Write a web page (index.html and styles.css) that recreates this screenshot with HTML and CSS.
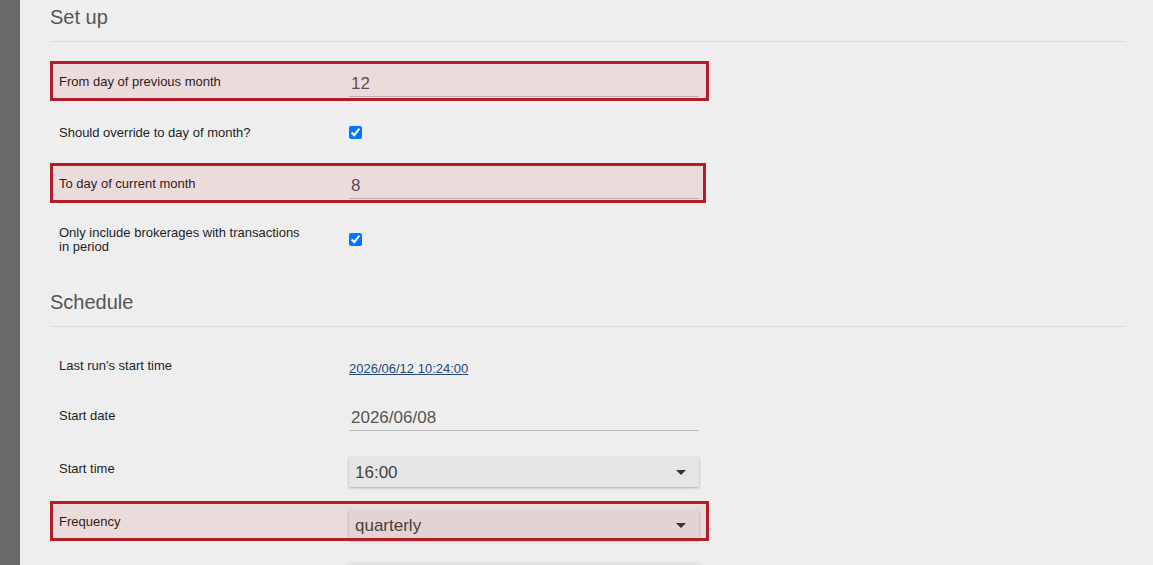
FILE: index.html
```html
<!DOCTYPE html>
<html lang="en">
<head>
<meta charset="utf-8">
<title>Report job settings</title>
<link rel="stylesheet" href="styles.css">
</head>
<body>
  <aside class="rail"></aside>
  <main class="form">
    <section class="section">
      <h2 class="section-title">Set up</h2>

      <div class="row row--flag">
        <label class="row-label" for="from-day">From day of previous month</label>
        <input class="text-field" id="from-day" type="text" value="12">
      </div>

      <div class="row">
        <label class="row-label" for="override">Should override to day of month?</label>
        <input class="check" id="override" type="checkbox" checked>
      </div>

      <div class="row row--flag row--flag-tight">
        <label class="row-label" for="to-day">To day of current month</label>
        <input class="text-field" id="to-day" type="text" value="8">
      </div>

      <div class="row">
        <label class="row-label" for="only-tx">Only include brokerages with transactions in period</label>
        <input class="check" id="only-tx" type="checkbox" checked>
      </div>
    </section>

    <section class="section">
      <h2 class="section-title">Schedule</h2>

      <div class="row row--compact">
        <span class="row-label">Last run's start time</span>
        <a class="value-link" href="#">2026/06/12 10:24:00</a>
      </div>

      <div class="row">
        <label class="row-label" for="start-date">Start date</label>
        <input class="text-field" id="start-date" type="text" value="2026/06/08">
      </div>

      <div class="row row--select">
        <label class="row-label" for="start-time">Start time</label>
        <div class="select">
          <select id="start-time">
            <option>16:00</option>
          </select>
          <span class="select-caret"></span>
        </div>
      </div>

      <div class="row row--select row--flag">
        <label class="row-label" for="frequency">Frequency</label>
        <div class="select">
          <select id="frequency">
            <option>quarterly</option>
          </select>
          <span class="select-caret"></span>
        </div>
      </div>

      <div class="row row--select">
        <span class="row-label"></span>
        <div class="select">
          <select aria-label="Run day">
            <option></option>
          </select>
          <span class="select-caret"></span>
        </div>
      </div>
    </section>
  </main>
</body>
</html>
```

FILE: styles.css
```css
html, body {
  margin: 0;
  height: 100%;
}

body {
  display: flex;
  overflow: hidden;
  background: #eeeeee;
  font-family: "Liberation Sans", Arial, sans-serif;
  color: #222;
}

/* dark strip along the left edge */
.rail {
  flex: 0 0 20px;
  background: #696969;
}

.form {
  flex: 1;
  padding: 5px 27px 0 30px;
}

.section + .section {
  margin-top: 26px;
}

.section-title {
  margin: 0 0 19px;
  padding-bottom: 12px;
  border-bottom: 1px solid #dcdcdc;
  font-size: 20px;
  line-height: 24px;
  font-weight: normal;
  color: #555;
}

/* one label + control line */
.row {
  position: relative;
  box-sizing: border-box;
  width: 659px;
  min-height: 40px;
  padding: 3px 10px 3px 9px;
  margin-bottom: 11px;
  display: flex;
  align-items: center;
}

.row--compact {
  min-height: 38px;
}

.row--select {
  margin-top: 13px;
}

/* red call-out frame with a faint tint over the whole row */
.row--flag::after {
  content: "";
  position: absolute;
  inset: 0;
  border: 3px solid #b11e28;
  background: rgba(200, 0, 0, 0.075);
  pointer-events: none;
}

.row--flag-tight {
  width: 656px;
  padding-right: 7px;
}

.row-label {
  flex: 0 0 290px;
  box-sizing: border-box;
  padding: 9px 40px 7px 0;
  font-size: 13px;
  line-height: 14px;
  color: #1e1e1e;
}

.text-field {
  flex: 0 0 350px;
  align-self: flex-end;
  box-sizing: border-box;
  width: 350px;
  height: 24px;
  margin: 0 0 1px;
  padding: 0 2px 2px;
  border: none;
  border-bottom: 1px solid #bdbdbd;
  background: transparent;
  font-family: "Liberation Sans", Arial, sans-serif;
  font-size: 17px;
  color: #555;
  outline: none;
}

.check {
  margin: 0;
  width: 13px;
  height: 13px;
}

.value-link {
  margin-top: 6px;
  font-size: 13px;
  color: #24497a;
  text-decoration: underline;
}

.select {
  position: relative;
  flex: 0 0 350px;
  align-self: flex-end;
  height: 30px;
  margin-bottom: -2px;
}

.select select {
  appearance: none;
  -webkit-appearance: none;
  box-sizing: border-box;
  width: 100%;
  height: 100%;
  margin: 0;
  padding: 0 30px 0 6px;
  border: none;
  border-radius: 1px;
  background: #e5e5e5;
  box-shadow: 0 1px 3px rgba(0, 0, 0, 0.28);
  font-family: "Liberation Sans", Arial, sans-serif;
  font-size: 17px;
  color: #444;
  outline: none;
}

/* downward caret drawn on the right side of the select */
.select-caret {
  position: absolute;
  right: 13px;
  top: 13px;
  width: 0;
  height: 0;
  border-left: 5px solid transparent;
  border-right: 5px solid transparent;
  border-top: 5px solid #333;
  pointer-events: none;
}
```
